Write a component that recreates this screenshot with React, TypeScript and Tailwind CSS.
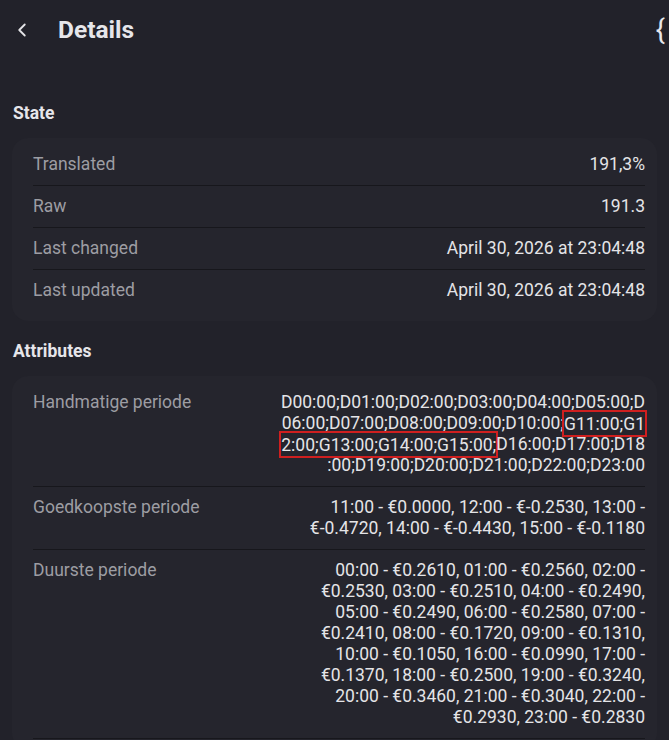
import React from 'react';
import { ChevronLeft } from 'lucide-react';

const stateRows = [
  { label: 'Translated', value: '191,3%' },
  { label: 'Raw', value: '191.3' },
  { label: 'Last changed', value: 'April 30, 2026 at 23:04:48' },
  { label: 'Last updated', value: 'April 30, 2026 at 23:04:48' },
];

const cheapest =
  '11:00 - €0.0000, 12:00 - €-0.2530, 13:00 - €-0.4720, 14:00 - €-0.4430, 15:00 - €-0.1180';

const expensive =
  '00:00 - €0.2610, 01:00 - €0.2560, 02:00 - €0.2530, 03:00 - €0.2510, 04:00 - €0.2490, 05:00 - €0.2490, 06:00 - €0.2580, 07:00 - €0.2410, 08:00 - €0.1720, 09:00 - €0.1310, 10:00 - €0.1050, 16:00 - €0.0990, 17:00 - €0.1370, 18:00 - €0.2500, 19:00 - €0.3240, 20:00 - €0.3460, 21:00 - €0.3040, 22:00 - €0.2930, 23:00 - €0.2830';

const Row = ({
  label,
  children,
  last,
  breakAll,
}: {
  label: string;
  children: React.ReactNode;
  last?: boolean;
  breakAll?: boolean;
}) => (
  <div className={`flex justify-between gap-4 py-[10px] ${last ? '' : 'border-b border-[#17171c]'}`}>
    <div className="text-[#9d9da3] shrink-0">{label}</div>
    <div
      className={`max-w-[60%] text-right text-[#e4e4e7] ${breakAll ? 'break-all [line-break:anywhere]' : 'break-words'}`}
    >
      {children}
    </div>
  </div>
);

const App = () => {
  return (
    <div
      className="min-h-screen bg-[#22222a] text-[17.5px] leading-[21px] text-[#e4e4e7] overflow-hidden"
      style={{ fontFamily: 'Roboto, "Noto Sans", sans-serif' }}
    >
      <header className="h-[60px] flex items-center">
        <button className="ml-[11px] w-[22px] h-[22px] flex items-center justify-center text-[#e4e4e7]">
          <ChevronLeft className="w-[22px] h-[22px]" strokeWidth={2} />
        </button>
        <h1 className="ml-[25px] text-[24.5px] font-bold leading-[30px] text-[#e6e6ea]">Details</h1>
        <span className="ml-auto mr-[4px] text-[27px] leading-[30px] text-[#e6e6ea]">{'{'}</span>
      </header>

      <h2 className="mt-[43px] ml-[13px] font-bold text-[#e6e6ea] leading-[20px]">State</h2>
      <div className="mx-[12px] mt-[15px] rounded-2xl bg-[#25252d] pl-[21px] pr-[12px] pt-[6px] pb-[10px]">
        {stateRows.map((r, i) => (
          <Row key={r.label} label={r.label} last={i === stateRows.length - 1}>
            {r.value}
          </Row>
        ))}
      </div>

      <h2 className="mt-[20px] ml-[13px] font-bold text-[#e6e6ea] leading-[20px]">Attributes</h2>
      <div className="mx-[12px] mt-[15px] rounded-2xl bg-[#25252d] pl-[21px] pr-[12px] pt-[6px] pb-[10px]">
        <Row label="Handmatige periode" breakAll>
          D00:00;D01:00;D02:00;D03:00;D04:00;D05:00;D06:00;D07:00;D08:00;D09:00;D10:00;
          <span className="box-decoration-clone py-[1.5px] shadow-[0_0_0_2px_#cf1f1f]">G11:00;G12:00;G13:00;G14:00;G15:00;</span>
          D16:00;D17:00;D18:00;D19:00;D20:00;D21:00;D22:00;D23:00
        </Row>
        <Row label="Goedkoopste periode">{cheapest}</Row>
        <Row label="Duurste periode">{expensive}</Row>
      </div>
    </div>
  );
};

export default App;
